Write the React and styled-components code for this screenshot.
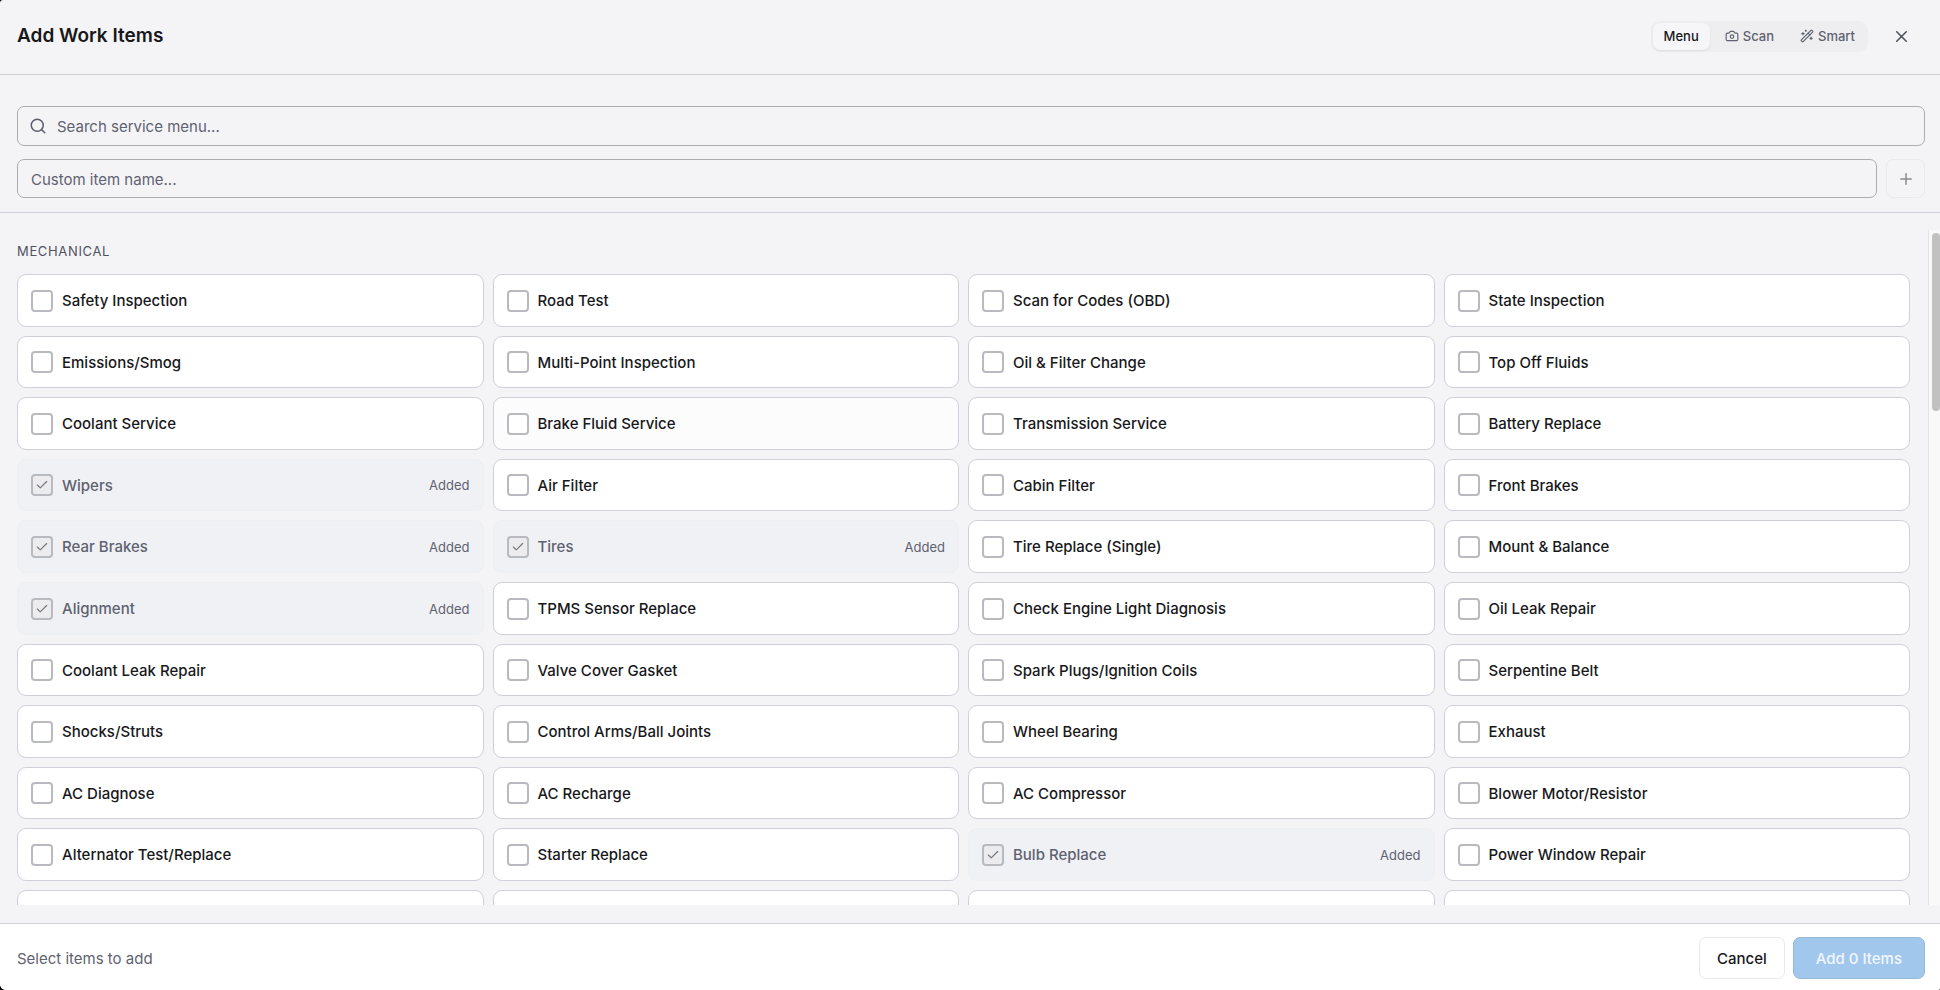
import React, { useState } from "react";
import styled, { createGlobalStyle } from "styled-components";
import { Camera, Check, Plus, Search, X } from "lucide-react";

const GlobalStyle = createGlobalStyle`
  *, *::before, *::after { box-sizing: border-box; }
  html, body { margin: 0; background: #000; }
  body, button, input { font-family: Inter, "Liberation Sans", sans-serif; font-size: 15px; line-height: 22px; }
  button { margin: 0; padding: 0; border: 0; background: none; }
`;

const Dialog = styled.main`
  display: flex;
  flex-direction: column;
  height: 100vh;
  overflow: hidden;
  background: #f4f4f7;
  color: #18181b;
  border-radius: 3px 0 2px 6px;
`;

const Header = styled.header`
  display: flex;
  align-items: center;
  justify-content: space-between;
  flex: none;
  height: 75px;
  padding: 0 17px 2px;
  border-bottom: 1px solid #cfd0d6;
`;

const Title = styled.h1`
  margin: 0;
  font-size: 19px;
  font-weight: 600;
  line-height: 28px;
`;

const HeaderActions = styled.div`
  display: flex;
  align-items: center;
  gap: 11px;
`;

const Tabs = styled.div`
  display: flex;
  align-items: center;
  gap: 4px;
  height: 31px;
  padding: 2px;
  border-radius: 9px;
  background: #eeeef0;
`;

const Tab = styled.button`
  display: flex;
  align-items: center;
  gap: 4px;
  height: 27px;
  padding: 0 11px;
  border-radius: 7px;
  font-size: 13px;
  font-weight: 500;
  color: ${(p) => (p.$active ? "#18181b" : "#5f6270")};
  background: ${(p) => (p.$active ? "#f6f6f8" : "transparent")};
  box-shadow: ${(p) => (p.$active ? "0 1px 2px rgba(0, 0, 0, 0.08)" : "none")};
`;

const CloseButton = styled.button`
  display: grid;
  place-items: center;
  width: 44px;
  height: 44px;
  color: #4f5261;
`;

const Entry = styled.section`
  display: grid;
  gap: 13px;
  flex: none;
  padding: 31px 15px 14px 17px;
  border-bottom: 1px solid #cdd0da;
`;

const EntryRow = styled.form`
  display: flex;
  gap: 9px;
`;

const Field = styled.label`
  display: flex;
  flex: 1;
  align-items: center;
  gap: 10px;
  height: ${(p) => (p.$search ? 40 : 39)}px;
  padding: 0 13px 0 ${(p) => (p.$search ? 11 : 13)}px;
  border: 1px solid #acacb1;
  border-radius: 7px;
  color: #5a5d6b;
`;

const TextInput = styled.input`
  flex: 1;
  min-width: 0;
  padding: 2px 0 0;
  border: 0;
  outline: 0;
  background: transparent;
  color: #18181b;
  &::placeholder { color: #5f6270; opacity: 1; }
`;

const AddButton = styled.button`
  display: grid;
  place-items: center;
  width: 39px;
  height: 39px;
  border: 1px solid #eaeaed;
  border-radius: 7px;
  color: #8b8b8f;
`;

const Body = styled.div`
  display: flex;
  flex: 1;
  min-height: 0;
  padding: 17px 0 18px;
`;

const List = styled.section`
  flex: 1;
  overflow-y: auto;
  scrollbar-width: none;
  padding: 11px 18px 0 17px;
`;

const Category = styled.h2`
  margin: 0 0 13px;
  font-size: 13px;
  font-weight: 400;
  line-height: 20px;
  letter-spacing: 0.05em;
  text-transform: uppercase;
  color: #50535f;
`;

const Grid = styled.div`
  display: grid;
  grid-template-columns: repeat(4, minmax(0, 1fr));
  grid-auto-rows: 53px 52px 53px 52px 53px;
  gap: 9px;
`;

const Card = styled.label`
  display: flex;
  align-items: center;
  gap: 9px;
  padding: 0 13px;
  border: 1px solid ${(p) => (p.$added ? "#eeeff3" : "#cfd0d9")};
  border-radius: 9px;
  background: ${(p) => (p.$added ? "#f0f1f5" : p.$hovered ? "#fcfcfd" : "#fff")};
  color: ${(p) => (p.$added ? "#5f6270" : "#18181b")};
  font-weight: 500;
`;

const CheckBox = styled.span`
  display: grid;
  flex: none;
  width: 22px;
  height: 22px;
  color: #75767e;
  > * { grid-area: 1 / 1; place-self: center; }
`;

const BoxInput = styled.input`
  appearance: none;
  width: 22px;
  height: 22px;
  margin: 0;
  border: 2px solid #b9b9c0;
  border-radius: 4px;
  background: ${(p) => (p.disabled ? "#ececef" : "#fff")};
`;

const Name = styled.span`
  flex: 1;
  padding-top: 1px;
`;

const AddedTag = styled.span`
  font-size: 13px;
  font-weight: 400;
  color: #5f6270;
`;

const Track = styled.div`
  flex: none;
  width: 12px;
  padding: 3px 0 0 3px;
  border-left: 1px solid #e3e3e5;
  background: #f9f9fa;
`;

const Thumb = styled.div`
  height: 178px;
  border-radius: 4px;
  background: #c1c1c1;
`;

const Footer = styled.footer`
  display: flex;
  align-items: center;
  justify-content: space-between;
  flex: none;
  padding: 13px 15px 11px 17px;
  border-top: 1px solid #cfd0d9;
  background: #fff;
`;

const Hint = styled.p`
  margin: 0;
  padding-top: 2px;
  color: #5f6270;
`;

const FooterActions = styled.div`
  display: flex;
  gap: 8px;
`;

const FooterButton = styled.button`
  height: 42px;
  padding: 2px ${(p) => (p.$primary ? 22 : 17)}px 0;
  border: 1px solid ${(p) => (p.$primary ? "#97b9d8" : "#e9e9eb")};
  border-radius: 7px;
  background: ${(p) => (p.$primary ? "#a1c8ec" : "#fff")};
  color: ${(p) => (p.$primary ? "#f1f6fc" : "#18181b")};
  font-weight: 500;
`;

const WandIcon = () => (
  <svg width="14" height="14" viewBox="0 0 24 24" fill="none" stroke="currentColor" strokeWidth="2" strokeLinecap="round" strokeLinejoin="round" aria-hidden="true">
    <path d="m21.64 3.64-1.28-1.28a1.21 1.21 0 0 0-1.72 0L2.36 18.64a1.21 1.21 0 0 0 0 1.72l1.28 1.28a1.2 1.2 0 0 0 1.72 0L21.64 5.36a1.2 1.2 0 0 0 0-1.72" />
    <path d="m14 7 3 3M5 6v4M19 14v4M10 2v2M7 8H3M21 16h-4M11 3H9" />
  </svg>
);

const items = [
  "Safety Inspection", "Road Test", "Scan for Codes (OBD)", "State Inspection",
  "Emissions/Smog", "Multi-Point Inspection", "Oil & Filter Change", "Top Off Fluids",
  "Coolant Service", "Brake Fluid Service", "Transmission Service", "Battery Replace",
  "Wipers", "Air Filter", "Cabin Filter", "Front Brakes",
  "Rear Brakes", "Tires", "Tire Replace (Single)", "Mount & Balance",
  "Alignment", "TPMS Sensor Replace", "Check Engine Light Diagnosis", "Oil Leak Repair",
  "Coolant Leak Repair", "Valve Cover Gasket", "Spark Plugs/Ignition Coils", "Serpentine Belt",
  "Shocks/Struts", "Control Arms/Ball Joints", "Wheel Bearing", "Exhaust",
  "AC Diagnose", "AC Recharge", "AC Compressor", "Blower Motor/Resistor",
  "Alternator Test/Replace", "Starter Replace", "Bulb Replace", "Power Window Repair",
  "", "", "", "",
];

const added = new Set(["Wipers", "Rear Brakes", "Tires", "Alignment", "Bulb Replace"]);

function ServiceCard({ name }) {
  const [selected, setSelected] = useState(false);
  const isAdded = added.has(name);
  return (
    <Card $added={isAdded} $hovered={name === "Brake Fluid Service"}>
      <CheckBox>
        <BoxInput
          type="checkbox"
          checked={isAdded || selected}
          disabled={isAdded}
          onChange={(e) => setSelected(e.target.checked)}
        />
        {(isAdded || selected) && <Check size={14} strokeWidth={2} />}
      </CheckBox>
      <Name>{name}</Name>
      {isAdded && <AddedTag>Added</AddedTag>}
    </Card>
  );
}

export default function App() {
  return (
    <Dialog>
      <GlobalStyle />
      <Header>
        <Title>Add Work Items</Title>
        <HeaderActions>
          <Tabs>
            <Tab type="button" $active>Menu</Tab>
            <Tab type="button"><Camera size={14} />Scan</Tab>
            <Tab type="button"><WandIcon />Smart</Tab>
          </Tabs>
          <CloseButton type="button" aria-label="Close"><X size={19} strokeWidth={2} /></CloseButton>
        </HeaderActions>
      </Header>
      <Entry>
        <Field $search>
          <Search size={18} strokeWidth={2} />
          <TextInput type="search" placeholder="Search service menu..." aria-label="Search service menu" />
        </Field>
        <EntryRow onSubmit={(e) => e.preventDefault()}>
          <Field>
            <TextInput type="text" placeholder="Custom item name..." aria-label="Custom item name" />
          </Field>
          <AddButton type="submit" disabled aria-label="Add custom item"><Plus size={18} strokeWidth={2} /></AddButton>
        </EntryRow>
      </Entry>
      <Body>
        <List>
          <Category>Mechanical</Category>
          <Grid>
            {items.map((name, i) => <ServiceCard key={i} name={name} />)}
          </Grid>
        </List>
        <Track><Thumb /></Track>
      </Body>
      <Footer>
        <Hint>Select items to add</Hint>
        <FooterActions>
          <FooterButton type="button">Cancel</FooterButton>
          <FooterButton type="button" $primary disabled>Add 0 Items</FooterButton>
        </FooterActions>
      </Footer>
    </Dialog>
  );
}
